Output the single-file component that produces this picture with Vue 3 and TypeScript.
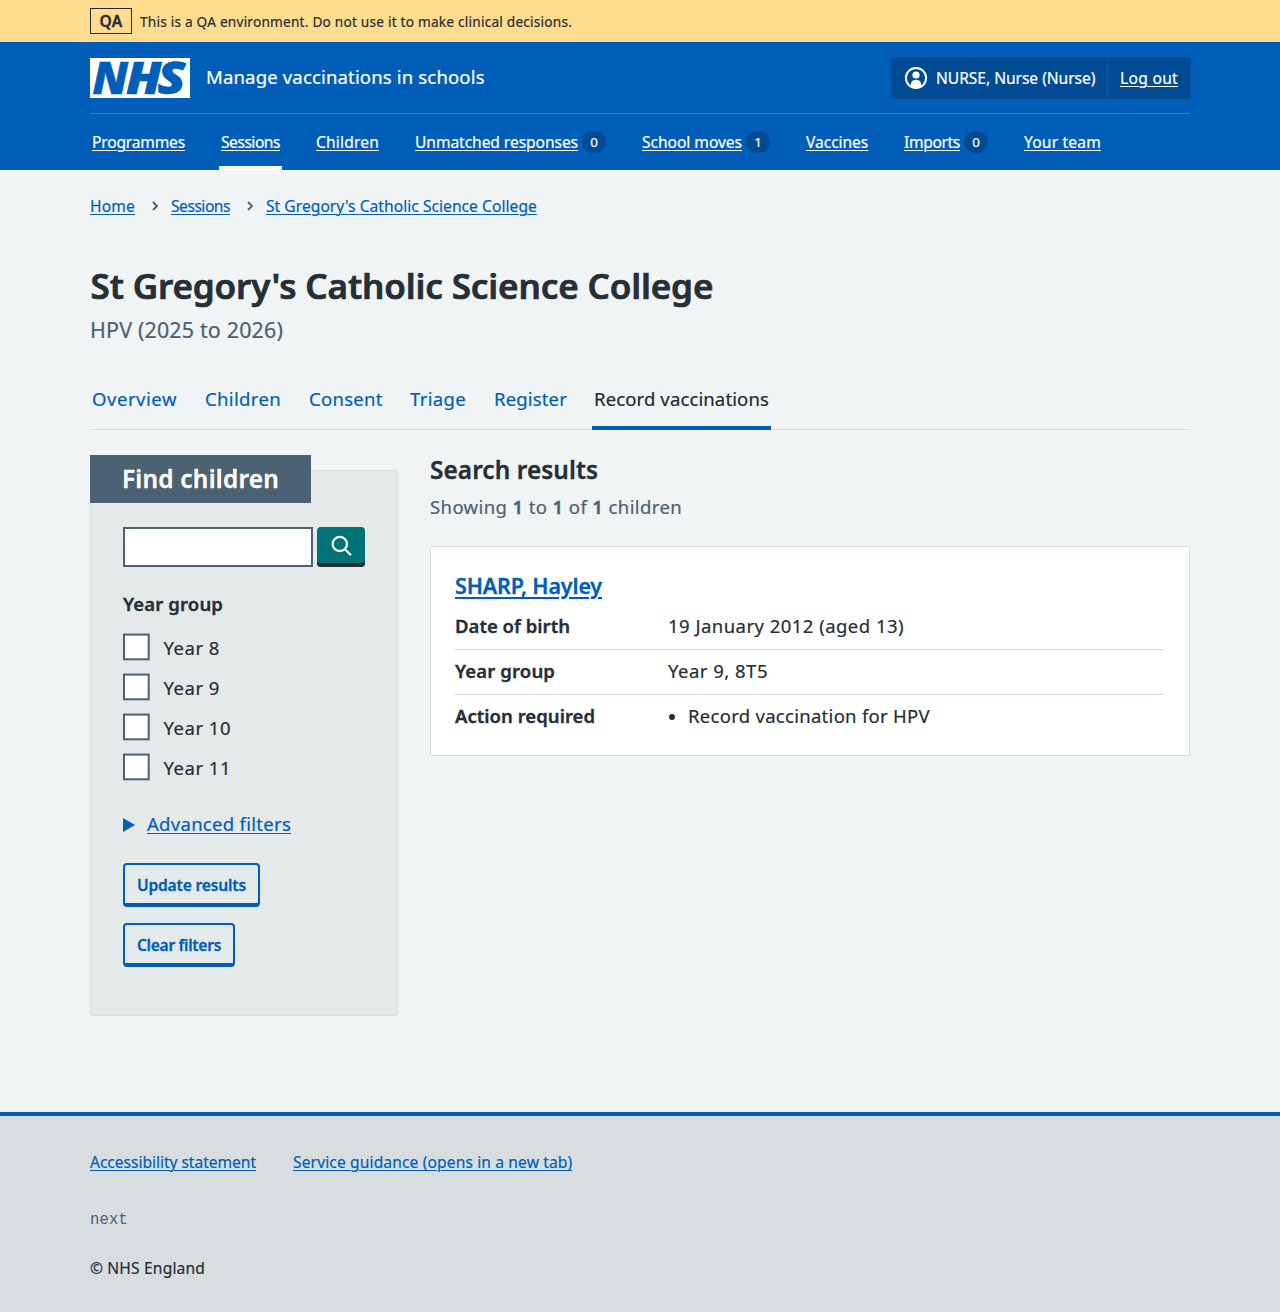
<script setup lang="ts">
interface Item {
  label: string
  width: number
  tracking: number
  count?: number
  current?: boolean
}

const navigation: Item[] = [
  { label: 'Programmes', width: 93, tracking: -0.19 },
  { label: 'Sessions', width: 59, tracking: -0.48, current: true },
  { label: 'Children', width: 63, tracking: 0.16 },
  { label: 'Unmatched responses', width: 163, tracking: -0.07, count: 0 },
  { label: 'School moves', width: 100, tracking: -0.04, count: 1 },
  { label: 'Vaccines', width: 62, tracking: -0.05 },
  { label: 'Imports', width: 56, tracking: -0.35, count: 0 },
  { label: 'Your team', width: 77, tracking: 0.18 },
]

const tabs: Item[] = [
  { label: 'Overview', width: 85, tracking: 0.53 },
  { label: 'Children', width: 76, tracking: 0.34 },
  { label: 'Consent', width: 73, tracking: 0.28 },
  { label: 'Triage', width: 56, tracking: 0.33 },
  { label: 'Register', width: 72, tracking: 0.15 },
  { label: 'Record vaccinations', width: 175, tracking: 0.12, current: true },
]

const years: Item[] = ['Year 8', 'Year 9', 'Year 10', 'Year 11'].map((label) => ({
  label,
  width: 80,
  tracking: 0.5,
}))

const spacing = (item: Item) => ({ width: `${item.width}px`, letterSpacing: `${item.tracking}px` })
</script>

<template>
  <div class="page">
    <div class="environment">
      <div class="container environment-inner">
        <strong class="environment-tag">QA</strong>
        <span class="environment-text">This is a QA environment. Do not use it to make clinical decisions.</span>
      </div>
    </div>

    <header class="header">
      <div class="container header-top">
        <svg class="logo" viewBox="0 0 100 40" width="100" height="40" role="img" aria-label="NHS">
          <rect width="100" height="40" fill="#fff" />
          <g class="logo-text">
            <text x="2.5" y="36" textLength="35.5" lengthAdjust="spacingAndGlyphs">N</text>
            <text x="36" y="36" textLength="35.5" lengthAdjust="spacingAndGlyphs">H</text>
            <text x="67.5" y="36" textLength="28" lengthAdjust="spacingAndGlyphs">S</text>
          </g>
        </svg>
        <a class="service">Manage vaccinations in schools</a>
        <div class="account">
          <div class="account-user">
            <svg width="24" height="24" viewBox="0 0 24 24" aria-hidden="true">
              <circle cx="12" cy="12" r="10.1" fill="none" stroke="#fff" stroke-width="2" />
              <circle cx="12" cy="9" r="3.6" fill="#fff" />
              <path d="M6.8 20.6v-2.2a5.2 4.7 0 0 1 10.4 0v2.2A10.4 10.4 0 0 1 6.8 20.6z" fill="#fff" />
            </svg>
            <span>NURSE, Nurse (Nurse)</span>
          </div>
          <a class="account-logout">Log out</a>
        </div>
      </div>
      <nav class="container nav">
        <a v-for="item in navigation" :key="item.label" class="nav-item" :class="{ current: item.current }">
          <span class="nav-label" :style="spacing(item)">{{ item.label }}</span>
          <span v-if="item.count !== undefined" class="badge">{{ item.count }}</span>
        </a>
      </nav>
    </header>

    <main class="container main">
      <nav class="breadcrumb">
        <a class="crumb-home">Home</a>
        <svg width="6" height="10" viewBox="0 0 6 10"><path d="M1 1l4 4-4 4" /></svg>
        <a class="crumb-sessions">Sessions</a>
        <svg width="6" height="10" viewBox="0 0 6 10"><path d="M1 1l4 4-4 4" /></svg>
        <a class="crumb-school">St Gregory's Catholic Science College</a>
      </nav>

      <h1>St Gregory's Catholic Science College</h1>
      <p class="caption">HPV (2025 to 2026)</p>

      <nav class="tabs">
        <a v-for="tab in tabs" :key="tab.label" class="tab" :class="{ current: tab.current }">
          <span :style="spacing(tab)">{{ tab.label }}</span>
        </a>
      </nav>

      <div class="columns">
        <section class="filters">
          <h2 class="filters-title"><span>Find children</span></h2>
          <div class="search">
            <input type="text" aria-label="Search" />
            <button type="button" aria-label="Search">
              <svg width="48" height="36" viewBox="0 0 48 36">
                <circle cx="22.8" cy="17" r="7.2" />
                <path d="M28 22.2l6 6" />
              </svg>
            </button>
          </div>
          <h3 class="filters-legend">Year group</h3>
          <label v-for="year in years" :key="year.label" class="check">
            <svg width="28" height="28" viewBox="0 0 28 28">
              <rect x="1" y="1.6" width="24.7" height="24.7" />
            </svg>
            <span :style="spacing(year)">{{ year.label }}</span>
          </label>
          <div class="advanced">
            <svg width="12" height="14" viewBox="0 0 12 14"><path d="M0 0l12 7-12 7z" fill="#005eb8" /></svg>
            <a>Advanced filters</a>
          </div>
          <button type="button" class="button update">Update results</button>
          <button type="button" class="button clear">Clear filters</button>
        </section>

        <section class="results">
          <h2>Search results</h2>
          <p class="showing">Showing <b>1</b> to <b>1</b> of <b>1</b> children</p>
          <article class="card">
            <h3><a>SHARP, Hayley</a></h3>
            <dl>
              <div class="row">
                <dt class="key-dob">Date of birth</dt>
                <dd class="value-dob">19 January 2012 (aged 13)</dd>
              </div>
              <div class="row">
                <dt class="key-year">Year group</dt>
                <dd class="value-year">Year 9, 8T5</dd>
              </div>
              <div class="row">
                <dt class="key-action">Action required</dt>
                <dd class="value-action"><i class="bullet"></i>Record vaccination for HPV</dd>
              </div>
            </dl>
          </article>
        </section>
      </div>
    </main>

    <footer class="footer">
      <div class="container">
        <div class="footer-links">
          <a class="accessibility">Accessibility statement</a>
          <a class="guidance">Service guidance (opens in a new tab)</a>
        </div>
        <p class="version">next</p>
        <p class="copyright">© NHS England</p>
      </div>
    </footer>
  </div>
</template>

<style>
body {
  margin: 0;
  background: #f0f4f5;
}
</style>

<style scoped>
.page {
  display: flex;
  flex-direction: column;
  height: 1312px;
  color: #262e36;
  font: 400 18.525px/28px "Noto Sans", "Open Sans", sans-serif;
  -webkit-text-stroke: 0.2px;
}
.page * {
  box-sizing: border-box;
}
.container {
  width: 1100px;
  margin: 0 auto;
}
h1, h2, h3, p, dl, dd {
  margin: 0;
}
h1, h2, h3, dt, b, strong {
  font-weight: 600;
  -webkit-text-stroke: 0.35px;
}
a, span, h1, h2, h3, p, dt, dd {
  white-space: nowrap;
}
a {
  text-underline-offset: 1.5px;
  text-decoration-thickness: 1px;
}

.environment {
  height: 42px;
  background: #ffdc8e;
}
.environment-inner {
  display: flex;
  align-items: center;
  gap: 8px;
  height: 42px;
}
.environment-tag {
  width: 42px;
  height: 26px;
  border: 1px solid #212b32;
  font-size: 15.6px;
  line-height: 24px;
  letter-spacing: 0.4px;
  text-align: center;
}
.environment-text {
  padding-top: 2px;
  font-size: 13.65px;
  letter-spacing: 0.22px;
}

.header {
  height: 128px;
  background: #005eb8;
  color: #fff;
}
.header-top {
  display: flex;
  align-items: flex-start;
  height: 72px;
  padding-top: 15px;
  border-bottom: 1px solid rgba(255, 255, 255, 0.2);
}
.logo {
  margin-top: 1px;
  overflow: visible;
}
.logo-text {
  fill: #005eb8;
  stroke: #005eb8;
  stroke-width: 0.6px;
  font: italic 800 44.6px "Open Sans", "Noto Sans", sans-serif;
}
.service {
  margin: 6px 0 0 16px;
  letter-spacing: 0.16px;
}
.account {
  display: flex;
  width: 300px;
  height: 42px;
  margin: 0 -1px 0 auto;
  border-radius: 4px;
  background: #004b93;
  font-size: 15.6px;
  line-height: 42px;
}
.account-user {
  display: flex;
  align-items: center;
  gap: 8px;
  width: 217px;
  padding-left: 13px;
  border-right: 1px solid #005eb8;
  letter-spacing: -0.04px;
}
.account-logout {
  padding-left: 12px;
  letter-spacing: 0.29px;
  text-decoration-line: underline;
}
.nav {
  display: flex;
  gap: 32px;
  height: 56px;
  font-size: 15.6px;
  line-height: 56px;
}
.nav-item {
  display: flex;
  align-items: center;
  gap: 4px;
  padding: 0 2px;
}
.nav-item.current {
  box-shadow: inset 0 -4px #fff;
}
.nav-label {
  text-decoration: underline 1px;
  text-underline-offset: 1.5px;
}
.badge {
  width: 24px;
  height: 22px;
  border-radius: 11px;
  background: #004b93;
  font-size: 13.3px;
  line-height: 23px;
  text-align: center;
}

.main {
  flex: 1;
}
.breadcrumb {
  display: flex;
  align-items: center;
  height: 24px;
  margin-top: 24px;
  color: #005eb8;
  font-size: 15.6px;
  line-height: 24px;
}
.breadcrumb a {
  text-decoration-line: underline;
}
.breadcrumb svg {
  margin: 0 13px 0 17px;
  fill: none;
  stroke: #4c6272;
  stroke-width: 1.9;
}
.crumb-home {
  width: 45px;
  letter-spacing: 0.16px;
}
.crumb-sessions {
  width: 59px;
  letter-spacing: -0.48px;
}
.crumb-school {
  letter-spacing: 0.04px;
}
h1 {
  margin-top: 43px;
  padding-left: 0.5px;
  font-size: 35.1px;
  line-height: 48px;
  letter-spacing: -0.15px;
  -webkit-text-stroke: 0.7px;
}
.caption {
  margin-top: 5px;
  color: #4c6272;
  font-size: 21.45px;
  line-height: 32px;
  letter-spacing: 0.16px;
}
.tabs {
  display: flex;
  gap: 24px;
  height: 62px;
  margin-top: 22px;
  border-bottom: 1px solid #d8dde0;
  color: #005eb8;
}
.tab {
  height: 62px;
  padding: 0 2px;
  line-height: 61px;
}
.tab span {
  display: block;
}
.tab.current {
  box-shadow: inset 0 -4px #005eb8;
  color: #212b32;
}

.columns {
  display: flex;
  align-items: flex-start;
  gap: 32px;
  margin-top: 25px;
}
.filters {
  display: flex;
  flex-direction: column;
  align-items: flex-start;
  width: 308px;
  height: 546px;
  margin-top: 15px;
  padding: 0 32px;
  border: 1px solid #d8dde0;
  background: #e4e9e9;
}
.filters-title {
  width: 221px;
  height: 48px;
  margin: -16px 0 24px -33px;
  padding-left: 32px;
  background: #4c6272;
  color: #fff;
  font-size: 24.375px;
  line-height: 48px;
  letter-spacing: 0.25px;
}
.search {
  display: flex;
  gap: 4px;
}
.search input {
  width: 190px;
  height: 40px;
  border: 2px solid #4c6272;
  background: #fff;
}
.search button {
  width: 48px;
  height: 40px;
  padding: 0;
  border: 0;
  border-radius: 4px;
  background: #007377;
  box-shadow: inset 0 -4px #262e36;
}
.search svg {
  display: block;
  margin-bottom: 4px;
  fill: none;
  stroke: #fff;
  stroke-width: 2.2;
}
.filters-legend {
  margin: 23px 0 15px;
  font-size: 18.525px;
  line-height: 28px;
  letter-spacing: 0.12px;
}
.check {
  display: flex;
  gap: 12px;
  height: 40px;
}
.check span {
  padding: 1px 0 0 0.5px;
}
.check svg {
  fill: #fff;
  stroke: #4c6272;
  stroke-width: 2;
}
.advanced {
  display: flex;
  align-items: center;
  gap: 12px;
  height: 28px;
  margin: 17px 0 25px;
  color: #005eb8;
  letter-spacing: 0.28px;
}
.advanced svg {
  margin-top: 2px;
}
.advanced a {
  text-decoration-line: underline;
}
.button {
  height: 44px;
  margin-bottom: 16px;
  padding: 2px 0 0;
  border: solid #005eb8;
  border-width: 2px 2px 4px;
  border-radius: 4px;
  background: transparent;
  color: #005eb8;
  font: 600 15.6px/36px "Noto Sans", "Open Sans", sans-serif;
  -webkit-text-stroke: 0.3px;
}
.update {
  width: 137px;
  letter-spacing: -0.17px;
}
.clear {
  width: 112px;
  letter-spacing: -0.3px;
}

.results {
  width: 760px;
}
.results h2 {
  margin-top: -1px;
  font-size: 24.375px;
  line-height: 32px;
  letter-spacing: 0.09px;
}
.showing {
  margin: 7px 0 25px;
  color: #4c6272;
  letter-spacing: 0.39px;
}
.card {
  height: 210px;
  padding: 23px 24px 0;
  border: 1px solid #d8dde0;
  background: #fff;
}
.card h3 {
  margin-top: 0;
  font-size: 21.45px;
  line-height: 32px;
  letter-spacing: -0.12px;
}
.card h3 a {
  color: #005eb8;
  text-decoration: underline 2px;
  text-underline-offset: 3px;
}
.row {
  display: flex;
  height: 45px;
  line-height: 42px;
  border-bottom: 1px solid #d8dde0;
}
.row:first-child {
  height: 48px;
  line-height: 48px;
}
.row:last-child {
  border-bottom: 0;
}
dt {
  width: 213px;
}
.key-dob {
  letter-spacing: 0.01px;
}
.key-year {
  letter-spacing: 0.12px;
}
.key-action {
  letter-spacing: 0.02px;
}
.value-dob {
  letter-spacing: 0.46px;
}
.value-year {
  letter-spacing: 0.48px;
}
.value-action {
  display: flex;
  height: 42px;
  align-items: center;
  letter-spacing: 0.28px;
}
.bullet {
  width: 6px;
  height: 6px;
  margin: 2px 13px 0 1px;
  border-radius: 50%;
  background: #262e36;
}

.footer {
  height: 200px;
  padding-top: 34px;
  border-top: 4px solid #005eb8;
  background: #d8dde0;
  font-size: 15.6px;
  line-height: 24px;
}
.footer-links {
  display: flex;
  color: #005eb8;
}
.footer-links a {
  text-decoration-line: underline;
}
.accessibility {
  margin-right: 37px;
  letter-spacing: -0.04px;
}
.guidance {
  letter-spacing: 0.12px;
}
.version {
  margin-top: 34px;
  color: #4c6272;
  font-family: "Liberation Mono", monospace;
  letter-spacing: 0.1px;
  -webkit-text-stroke: 0;
}
.copyright {
  margin-top: 24px;
  letter-spacing: 0.16px;
}
</style>
